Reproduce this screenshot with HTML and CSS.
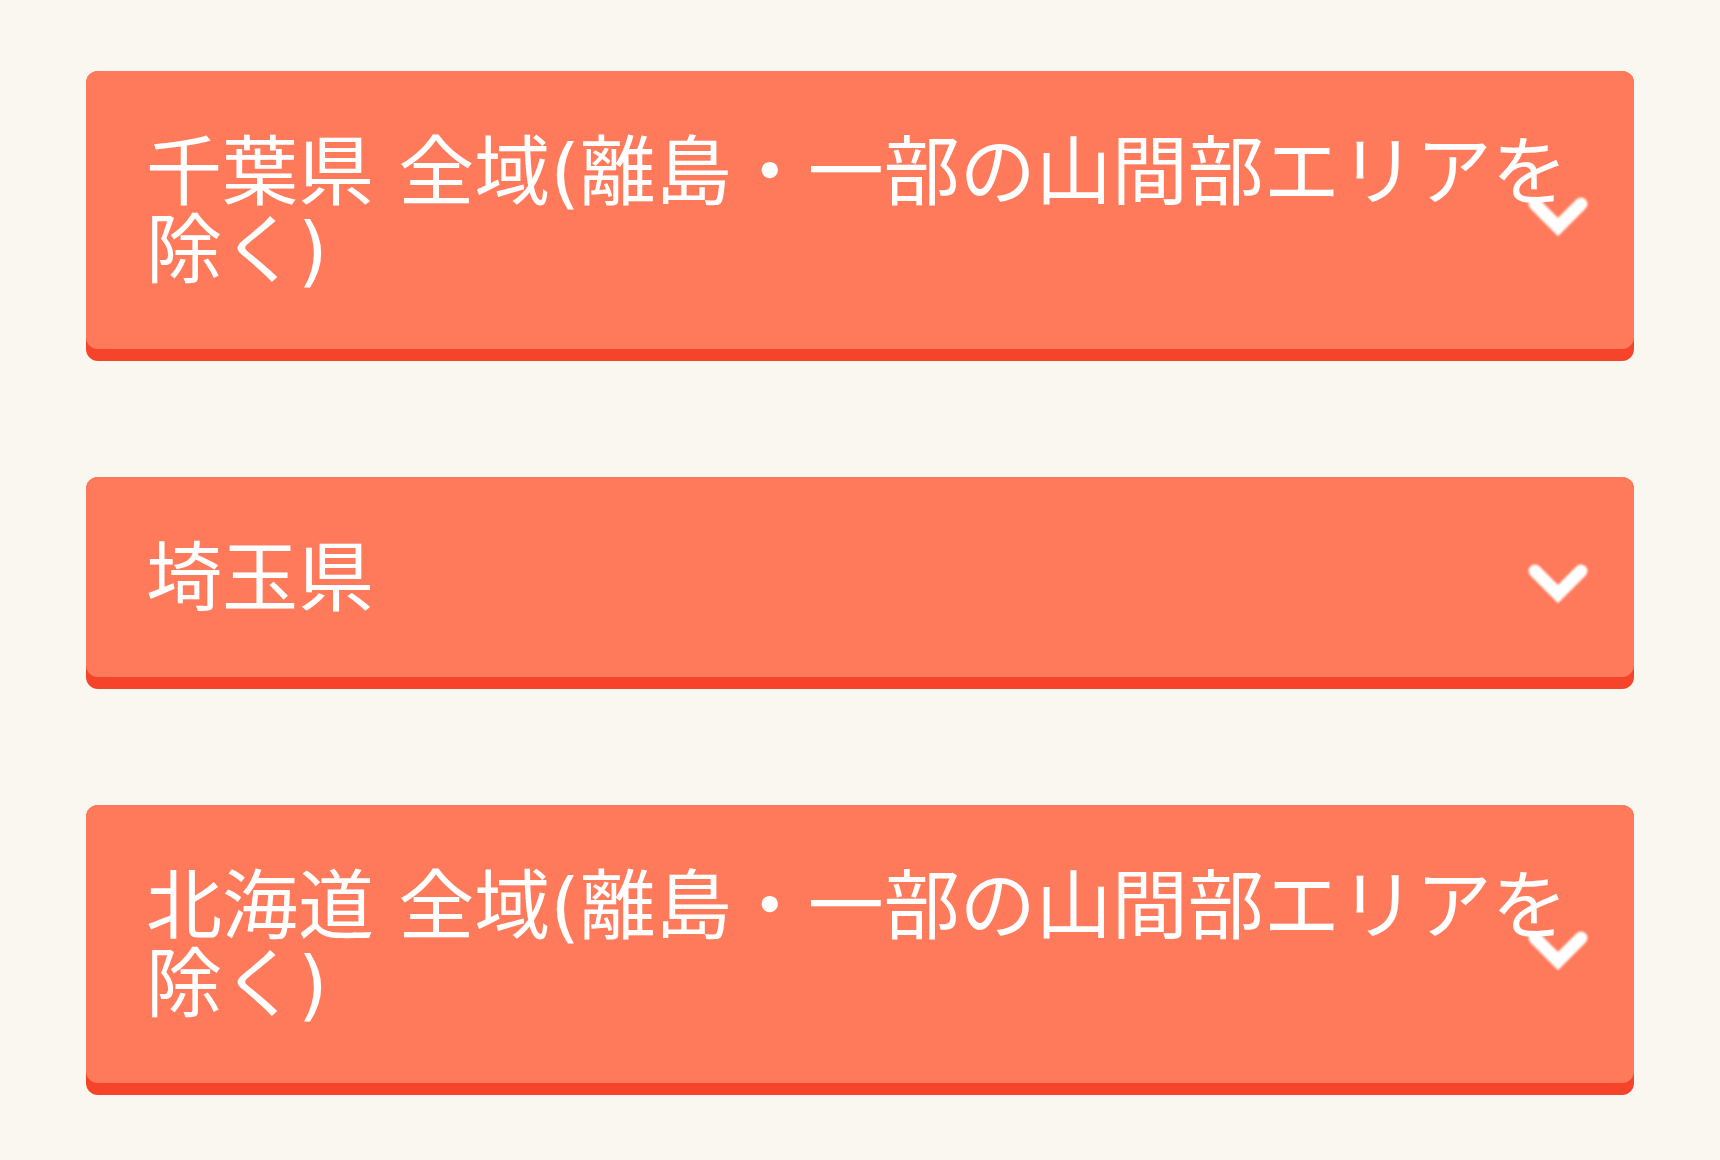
FILE: index.html
```html
<!DOCTYPE html>
<html lang="ja">
<head>
  <meta charset="UTF-8">
  <title>配送エリア</title>
  <link rel="stylesheet" href="styles.css">
</head>
<body>

  <div class="area-list">
    <div class="area">
      <div class="area-head">千葉県 全域(離島・一部の山間部エリアを除く)</div>
      <svg class="chevron" viewBox="0 0 62 40" width="62" height="40"><polyline points="8,8 31,31 54,8"/></svg>
    </div>

    <div class="area">
      <div class="area-head">埼玉県</div>
      <svg class="chevron" viewBox="0 0 62 40" width="62" height="40"><polyline points="8,8 31,31 54,8"/></svg>
    </div>

    <div class="area">
      <div class="area-head">北海道 全域(離島・一部の山間部エリアを除く)</div>
      <svg class="chevron" viewBox="0 0 62 40" width="62" height="40"><polyline points="8,8 31,31 54,8"/></svg>
    </div>
  </div>

</body>
</html>
```

FILE: styles.css
```css
body {
  background-color: #faf7f0;
  margin: 0;
  padding: 0;
  font-family: "DejaVu Sans", "Noto Sans CJK JP", sans-serif;
}

.area-list {
  display: flex;
  flex-direction: column;
  gap: 116px;
  padding: 71px 86px;
}

.area {
  position: relative;
  background-color: #f6442a;
  border-radius: 12px;
  padding-bottom: 12px;
  cursor: pointer;
}

.area-head {
  background-color: #ff7a5b;
  border-radius: 12px;
  color: #fff;
  font-size: 76px;
  line-height: 78px;
  padding: 63px 58px 59px 60px;
}

.chevron {
  position: absolute;
  right: 45px;
  top: 50%;
  transform: translateY(-50%);
  filter: blur(0.8px);
}

.chevron polyline {
  fill: none;
  stroke: #fff;
  stroke-width: 13;
  stroke-linecap: round;
  stroke-linejoin: miter;
}
```
